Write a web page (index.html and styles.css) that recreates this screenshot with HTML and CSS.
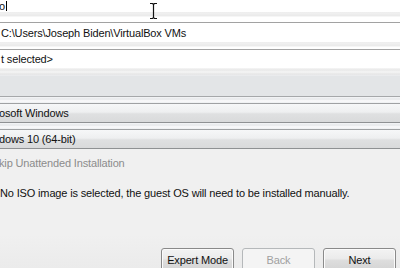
FILE: index.html
```html
<!DOCTYPE html>
<html>
<head>
<meta charset="utf-8">
<link rel="stylesheet" href="styles.css">
</head>
<body>
<div class="dialog">
  <div class="inputs">
    <div class="name-row"><span class="val">o</span><span class="caret"></span></div>
    <div class="bands"></div>
    <div class="gap5"></div>
    <div class="edit"><span class="val">C:\Users\Joseph Biden\VirtualBox VMs</span></div>
    <div class="bands"></div>
    <div class="gap2"></div>
    <div class="edit iso"><span class="val">t selected&gt;</span></div>
    <div class="bands tall"></div>
  </div>
  <div class="edition"></div>
  <div class="sep"></div>
  <div class="combo"><span class="val">osoft Windows</span></div>
  <div class="sep"></div>
  <div class="combo"><span class="val">dows 10 (64-bit)</span></div>
  <div class="check">kip Unattended Installation</div>
  <div class="note">No ISO image is selected, the guest OS will need to be installed manually.</div>
  <div class="buttons">
    <button class="btn">Expert Mode</button>
    <button class="btn disabled">Back</button>
    <button class="btn">Next</button>
  </div>
  <svg class="ibeam" width="9" height="18" viewBox="0 0 9 18">
    <path d="M1 1.5h2.5l1 1 1-1H8M4.5 2.5v13M1 16.5h2.5l1-1 1 1H8" fill="none" stroke="#111" stroke-width="1.2"/>
  </svg>
</div>
</body>
</html>
```

FILE: styles.css
```css
html, body {
  margin: 0;
  padding: 0;
}
body {
  width: 400px;
  height: 268px;
  overflow: hidden;
  background: #f0f0f0;
  font-family: "Liberation Sans", Arial, sans-serif;
  font-size: 11px;
  letter-spacing: -0.15px;
  color: #111;
}
.dialog {
  position: relative;
  height: 268px;
  display: flex;
  flex-direction: column;
}
.inputs {
  background: #fff;
  display: flex;
  flex-direction: column;
}
.name-row {
  height: 12px;
  display: flex;
  align-items: flex-end;
  line-height: 12px;
}
.name-row .val {
  margin-left: -1px;
}
.caret {
  width: 1px;
  height: 10px;
  background: #000;
  margin-left: 1px;
  margin-bottom: 1px;
}
.bands {
  height: 5px;
  background: linear-gradient(#f4f4f4 0, #e9e9e9 20%, #f6f6f6 40%, #e4e4e4 60%, #f2f2f2 80%, #fafafa 100%);
}
.bands.tall {
  height: 8px;
  background: linear-gradient(#f6f6f6 0, #e8e8e8 25%, #f5f5f5 50%, #e6e6e6 75%, #ebedef 100%);
}
.gap5 { height: 5px; }
.gap2 { height: 2px; }
.edit {
  border-top: 1px solid #a2a2a2;
  height: 19px;
  line-height: 20px;
  padding-left: 1px;
}
.edit.iso {
  height: 18px;
  line-height: 19px;
}
.edition {
  height: 20px;
  background: #e3e5e7;
  border-bottom: 1px solid #a6a8aa;
}
.sep {
  height: 6px;
  background: linear-gradient(#f4f5f7 0, #e6e8ea 35%, #fbfbfc 65%, #eceef0 100%);
}
.combo {
  height: 18px;
  line-height: 19px;
  border-top: 1px solid #9fa1a3;
  border-bottom: 1px solid #8f9193;
  background: linear-gradient(#f6f7f8 0, #eeeff0 45%, #dfe0e1 55%, #d9dadb 100%);
}
.combo .val {
  margin-left: -1px;
}
.check {
  margin-top: 6px;
  height: 15px;
  line-height: 16px;
  color: #8c8c8c;
  margin-left: -1px;
}
.note {
  margin-top: 15px;
  height: 15px;
  line-height: 16px;
}
.buttons {
  margin-top: auto;
  height: 33px;
  background: linear-gradient(#f0f0f0, #ebebeb);
  display: flex;
  justify-content: flex-end;
  align-items: flex-start;
  gap: 8px;
  padding: 13px 4px 0 0;
  box-sizing: border-box;
}
.btn {
  width: 73px;
  height: 23px;
  flex: none;
  font: inherit;
  letter-spacing: inherit;
  color: #111;
  border: 1px solid #8a8a8a;
  border-radius: 3px;
  background: linear-gradient(#f3f3f3 0, #ebebeb 45%, #dddddd 55%, #d4d4d4 100%);
  box-shadow: inset 0 0 0 1px #fbfbfb;
  padding: 0;
}
.btn.disabled {
  color: #a0a0a0;
  border-color: #b5b8ba;
  background: #f4f4f4;
  box-shadow: none;
}
.ibeam {
  position: absolute;
  left: 149px;
  top: 2px;
}
```
